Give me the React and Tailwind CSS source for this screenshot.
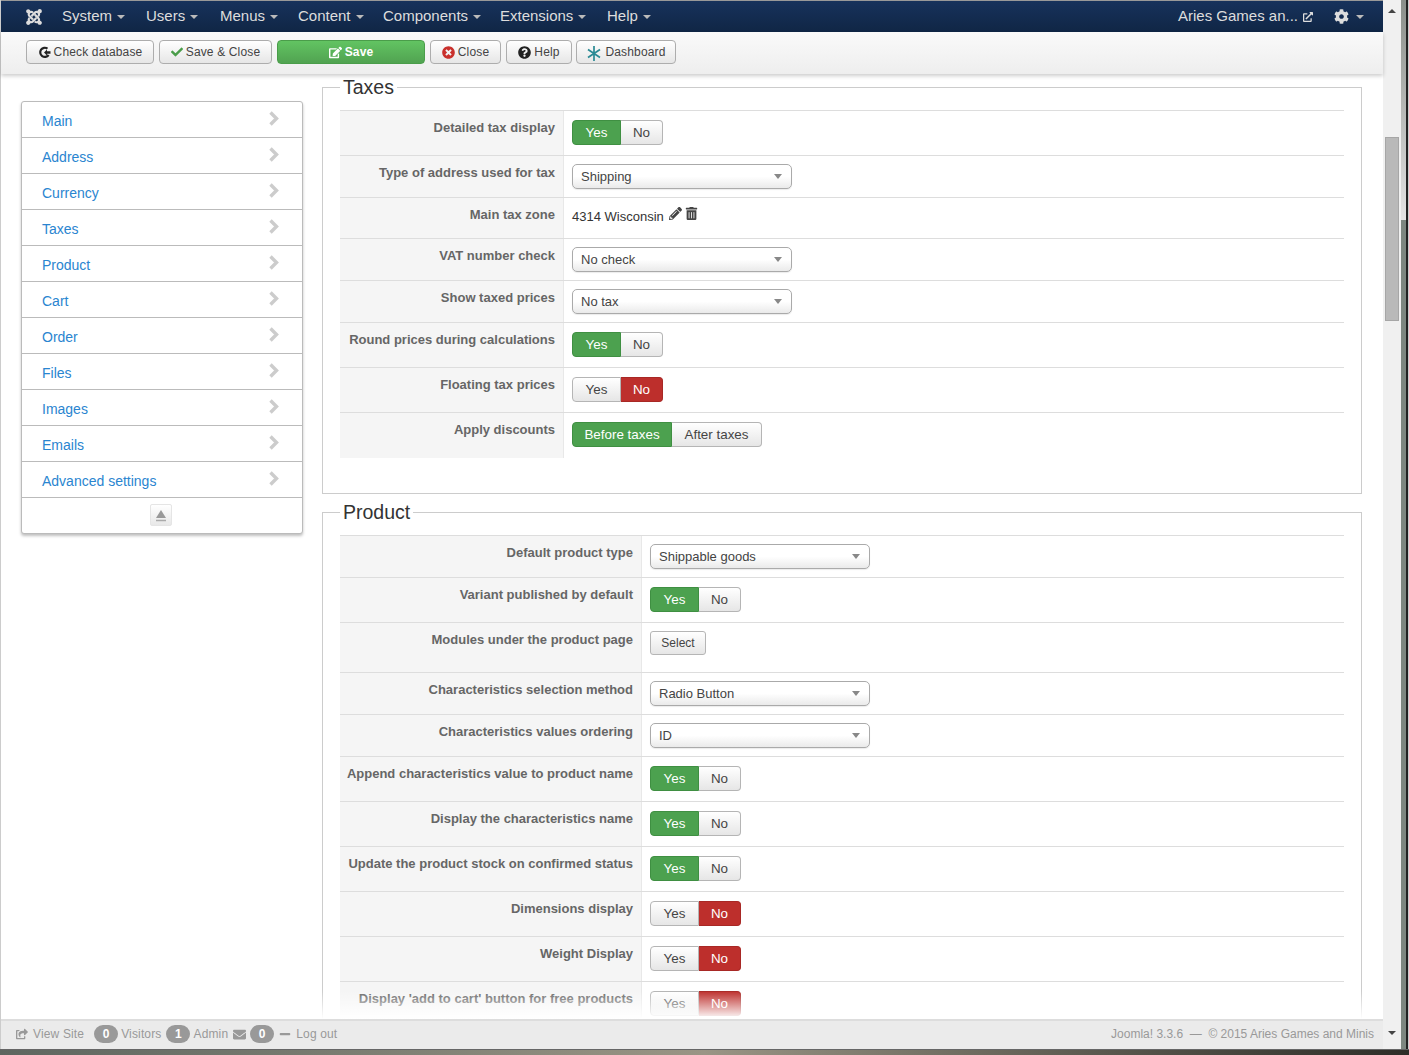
import {
  FaJoomla, FaCheck, FaEdit, FaTimesCircle, FaQuestionCircle, FaCog, FaExternalLinkAlt,
  FaPencilAlt, FaTrashAlt, FaEnvelope, FaMinus, FaShareSquare,
} from 'react-icons/fa'

const MENU = [
  { name: 'System', w: 'w-[84px]' },
  { name: 'Users', w: 'w-[74px]' },
  { name: 'Menus', w: 'w-[78px]' },
  { name: 'Content', w: 'w-[85px]' },
  { name: 'Components', w: 'w-[117px]' },
  { name: 'Extensions', w: 'w-[107px]' },
  { name: 'Help', w: 'w-[60px]' },
]
const SIDE = ['Main', 'Address', 'Currency', 'Taxes', 'Product', 'Cart', 'Order', 'Files', 'Images', 'Emails', 'Advanced settings']

const TAXES = [
  { label: 'Detailed tax display', h: 'h-[45px]', type: 'yes' },
  { label: 'Type of address used for tax', h: 'h-[42px]', type: 'select', value: 'Shipping' },
  { label: 'Main tax zone', h: 'h-[41px]', type: 'zone' },
  { label: 'VAT number check', h: 'h-[42px]', type: 'select', value: 'No check' },
  { label: 'Show taxed prices', h: 'h-[42px]', type: 'select', value: 'No tax' },
  { label: 'Round prices during calculations', h: 'h-[45px]', type: 'yes' },
  { label: 'Floating tax prices', h: 'h-[45px]', type: 'no' },
  { label: 'Apply discounts', h: 'h-[46px]', type: 'discount' },
]

const PRODUCT = [
  { label: 'Default product type', h: 'h-[42px]', type: 'select', value: 'Shippable goods' },
  { label: 'Variant published by default', h: 'h-[45px]', type: 'yes' },
  { label: 'Modules under the product page', h: 'h-[50px]', type: 'button' },
  { label: 'Characteristics selection method', h: 'h-[42px]', type: 'select', value: 'Radio Button' },
  { label: 'Characteristics values ordering', h: 'h-[42px]', type: 'select', value: 'ID' },
  { label: 'Append characteristics value to product name', h: 'h-[45px]', type: 'yes' },
  { label: 'Display the characteristics name', h: 'h-[45px]', type: 'yes' },
  { label: 'Update the product stock on confirmed status', h: 'h-[45px]', type: 'yes' },
  { label: 'Dimensions display', h: 'h-[45px]', type: 'no' },
  { label: 'Weight Display', h: 'h-[45px]', type: 'no' },
  { label: "Display 'add to cart' button for free products", h: 'h-[45px]', type: 'no' },
]

function Caret({ className }) {
  return <span className={`inline-block w-0 h-0 border-x-[4px] border-x-transparent border-t-[4px] ${className}`} />
}

function CheckDbIcon() {
  return (
    <svg width="13" height="13" viewBox="0 0 13 13" className="shrink-0">
      <path d="M9.5 2.6A4.6 4.6 0 1 0 10.6 9" fill="none" stroke="#222" strokeWidth="2.2" />
      <path d="M6 6.5 9 3.6v1.7h3.5v2.4H9v1.7z" fill="#222" />
    </svg>
  )
}

function ToolButton({ w, icon, children, green, className = '' }) {
  return (
    <div className={`flex items-center justify-center gap-[3px] h-[24px] rounded-[4px] border text-[12px] tracking-[0.15px] ${w} ${className} ${green
      ? 'border-[#4a9d4a] bg-gradient-to-b from-[#62c462] to-[#51a351] text-white font-bold'
      : 'border-[#adadad] bg-gradient-to-b from-white to-[#e6e6e6] text-[#444]'}`}>
      {icon}
      <span>{children}</span>
    </div>
  )
}

function Toggle({ left, right, active, lw, rw }) {
  const on = 'bg-[#4ca14f] border-[#3f8f42] text-white'
  const off = 'bg-gradient-to-b from-white to-[#e6e6e6] border-[#b5b5b5] text-[#444]'
  return (
    <div className="flex h-[25px] text-[13.4px]">
      <div className={`flex items-center justify-center pt-[1px] rounded-l-[4px] border ${lw} ${active === 'left' ? on : off}`}>{left}</div>
      <div className={`flex items-center justify-center pt-[1px] rounded-r-[4px] border border-l-0 ${rw} ${active === 'right' ? 'bg-[#bd2f2c] border-[#a82825] text-white' : off}`}>{right}</div>
    </div>
  )
}

function SelectBox({ value }) {
  return (
    <div className="flex items-center justify-between w-[220px] h-[25px] pl-[8px] pr-[9px] rounded-[5px] border border-[#aaa] bg-gradient-to-b from-white via-white to-[#eaeaea] text-[13px] text-[#444] shadow-[0_1px_1px_rgba(0,0,0,0.08)]">
      <span className="pt-[1px]">{value}</span>
      <Caret className="border-t-[#888] border-t-[5px]" />
    </div>
  )
}

function Control({ row }) {
  if (row.type === 'yes') return <div className="pt-[9px]"><Toggle left="Yes" right="No" active="left" lw="w-[49px]" rw="w-[42px]" /></div>
  if (row.type === 'no') return <div className="pt-[9px]"><Toggle left="Yes" right="No" active="right" lw="w-[49px]" rw="w-[42px]" /></div>
  if (row.type === 'discount') return <div className="pt-[9px]"><Toggle left="Before taxes" right="After taxes" active="left" lw="w-[100px]" rw="w-[90px]" /></div>
  if (row.type === 'select') return <div className="pt-[8px]"><SelectBox value={row.value} /></div>
  if (row.type === 'button') {
    return (
      <div className="pt-[8px]">
        <div className="flex items-center justify-center w-[56px] h-[24px] rounded-[3px] border border-[#b5b5b5] bg-gradient-to-b from-white to-[#e6e6e6] text-[12px] text-[#444]">Select</div>
      </div>
    )
  }
  return (
    <div className="flex items-start pt-[9px] text-[13px] text-[#333]">
      <span>4314 Wisconsin</span>
      <FaPencilAlt size={13} className="ml-[5px] text-[#444]" />
      <FaTrashAlt size={13} className="ml-[3px] text-[#444]" />
    </div>
  )
}

function Row({ row, labelW }) {
  return (
    <div className={`flex border-t border-[#ddd] ${row.h}`}>
      <div className={`${labelW} shrink-0 bg-[#f5f5f5] border-r border-[#e8e8e8] pr-[8px] pt-[8px] text-right text-[13px] leading-[17px] font-bold text-[#666]`}>
        {row.label}
      </div>
      <div className="flex-1 pl-[8px]"><Control row={row} /></div>
    </div>
  )
}

function Section({ title, rows, labelW, className }) {
  return (
    <fieldset className={`border border-[#ccc] px-[17px] ${className}`}>
      <legend className="px-[3px] text-[19.5px] leading-[22px] text-[#333]">{title}</legend>
      <div className="pt-[12px]">
        {rows.map(r => <Row key={r.label} row={r} labelW={labelW} />)}
      </div>
    </fieldset>
  )
}

export default function App() {
  return (
    <div className="flex flex-col w-[1409px] h-[1055px] overflow-hidden bg-white font-['Liberation_Sans',Arial,sans-serif]">
      <div className="flex flex-1 min-h-0">
        <div className="flex flex-col w-[1383px] border-l border-[#ccc]">
          {/* top menu */}
          <div className="flex items-center justify-between h-[32px] shrink-0 border-t border-[#999] bg-gradient-to-b from-[#17325c] to-[#102645] text-[15px] text-[#ddd]">
            <div className="flex items-center">
              <FaJoomla size={18} className="ml-[24px] mr-[19px] text-[#ddd]" />
              <div className="flex items-center">
                {MENU.map(m => (
                  <div key={m.name} className={`flex items-center gap-[5px] ${m.w}`}>
                    <span>{m.name}</span>
                    <Caret className="border-t-[#bbb]" />
                  </div>
                ))}
              </div>
            </div>
            <div className="flex items-center pr-[19px]">
              <span>Aries Games an...</span>
              <FaExternalLinkAlt size={10} className="ml-[5px] text-[#ddd]" />
              <FaCog size={15} className="ml-[21px] text-[#ddd]" />
              <Caret className="ml-[7px] border-t-[#bbb]" />
            </div>
          </div>

          {/* toolbar */}
          <div className="relative z-10 flex items-start gap-[5px] h-[42px] shrink-0 pt-[8px] pl-[25px] bg-gradient-to-b from-[#fafafa] to-[#eee] shadow-[0_2px_4px_rgba(0,0,0,0.2)]">
            <ToolButton w="w-[128px]" icon={<CheckDbIcon />}>Check database</ToolButton>
            <ToolButton w="w-[113px]" icon={<FaCheck size={12} className="text-[#4a9d4a]" />}>Save &amp; Close</ToolButton>
            <ToolButton w="w-[148px]" green icon={<FaEdit size={13} className="text-white" />}>Save</ToolButton>
            <ToolButton w="w-[71px]" icon={<FaTimesCircle size={13} className="text-[#c9302c]" />}>Close</ToolButton>
            <ToolButton w="w-[66px]" icon={<FaQuestionCircle size={13} className="text-[#222]" />}>Help</ToolButton>
            <ToolButton w="w-[100px]" className="-ml-px" icon={
              <svg width="16" height="17" viewBox="0 0 16 17" className="mt-[3px]">
                <path d="M8 1v15M2 4.5l12 8M14 4.5l-12 8" stroke="#2b8a94" strokeWidth="1.7" />
              </svg>
            }>Dashboard</ToolButton>
          </div>

          {/* page body */}
          <div className="relative flex flex-1 min-h-0 overflow-hidden pl-[20px]">
            <div className="w-[282px] shrink-0 pt-[27px]">
              <div className="rounded-[3px] border border-[#bbb] bg-white shadow-[0_2px_3px_rgba(0,0,0,0.25)]">
                {SIDE.map(s => (
                  <div key={s} className="flex items-center justify-between h-[36px] border-b border-[#bbb] pl-[20px] pr-[23px] text-[14px] text-[#2a85d0]">
                    <span className="pt-[4px]">{s}</span>
                    <svg width="11" height="15" viewBox="0 0 11 15" className="-mt-[2px]">
                      <path d="M2.5 1.5l6 6-6 6" fill="none" stroke="#ccc" strokeWidth="3.4" />
                    </svg>
                  </div>
                ))}
                <div className="flex justify-center h-[35px] pt-[6px] pr-[2px]">
                  <div className="flex items-center justify-center w-[22px] h-[22px] rounded-[2px] border border-[#e5e5e5] bg-gradient-to-b from-white to-[#e8e8e8]">
                    <svg width="12" height="13" viewBox="0 0 12 13">
                      <path d="M6 1l5 8H1z" fill="#999" />
                      <path d="M1 11.5h10" stroke="#aaa" strokeWidth="1.5" />
                    </svg>
                  </div>
                </div>
              </div>
            </div>
            <div className="ml-[19px] w-[1040px] shrink-0 pt-[2px]">
              <Section title="Taxes" rows={TAXES} labelW="w-[224px]" className="pb-[35px]" />
              <Section title="Product" rows={PRODUCT} labelW="w-[302px]" className="mt-[7px]" />
            </div>
            <div className="absolute left-0 right-0 bottom-0 h-[28px] bg-gradient-to-b from-white/0 to-white" />
          </div>

          {/* status bar */}
          <div className="flex items-center justify-between h-[30px] shrink-0 border-t-2 border-[#ddd] bg-[#ebebeb] pb-[2px] pl-[15px] pr-[9px] text-[12px] text-[#999]">
            <div className="flex items-center tracking-[0.15px]">
              <FaShareSquare size={12} className="text-[#999]" />
              <span className="ml-[5px]">View Site</span>
              <span className="ml-[10px] flex items-center justify-center w-[24px] h-[18px] rounded-full bg-[#999] text-white font-bold">0</span>
              <span className="ml-[3px]">Visitors</span>
              <span className="ml-[5px] flex items-center justify-center w-[24px] h-[18px] rounded-full bg-[#999] text-white font-bold">1</span>
              <span className="ml-[3px]">Admin</span>
              <FaEnvelope size={13} className="ml-[5px] text-[#999]" />
              <span className="ml-[4px] flex items-center justify-center w-[24px] h-[18px] rounded-full bg-[#999] text-white font-bold">0</span>
              <FaMinus size={12} className="ml-[5px] text-[#999]" />
              <span className="ml-[5px]">Log out</span>
            </div>
            <div>Joomla! 3.3.6 &nbsp;— &nbsp;© 2015 Aries Games and Minis</div>
          </div>
        </div>

        {/* browser scrollbar */}
        <div className="flex flex-col items-center w-[18px] shrink-0 bg-[#f0f0f0]">
          <div className="pt-[9px] h-[137px] shrink-0">
            <div className="w-0 h-0 border-x-[4px] border-x-transparent border-b-[4px] border-b-[#444]" />
          </div>
          <div className="w-[14px] h-[184px] shrink-0 border border-[#a6a6a6] bg-[#b9b9b9]" />
          <div className="mt-auto pb-[7px]">
            <Caret className="block border-t-[#444]" />
          </div>
        </div>

        {/* window frame */}
        <div className="flex w-[8px] shrink-0">
          <div className="flex flex-col w-[5px]">
            <div className="h-[220px] bg-gradient-to-b from-[#8a8f8a] to-[#e4e4e4]" />
            <div className="flex-1 bg-[#7d8780]" />
          </div>
          <div className="w-[2px] bg-[#222]" />
          <div className="w-[1px] bg-[#ccc]" />
        </div>
      </div>
      <div className="flex flex-col h-[6px] shrink-0 border-t border-[#666]">
        <div className="flex-1 bg-gradient-to-r from-[#5d665f] via-[#9a9585] to-[#2e2e28]" />
      </div>
    </div>
  )
}
